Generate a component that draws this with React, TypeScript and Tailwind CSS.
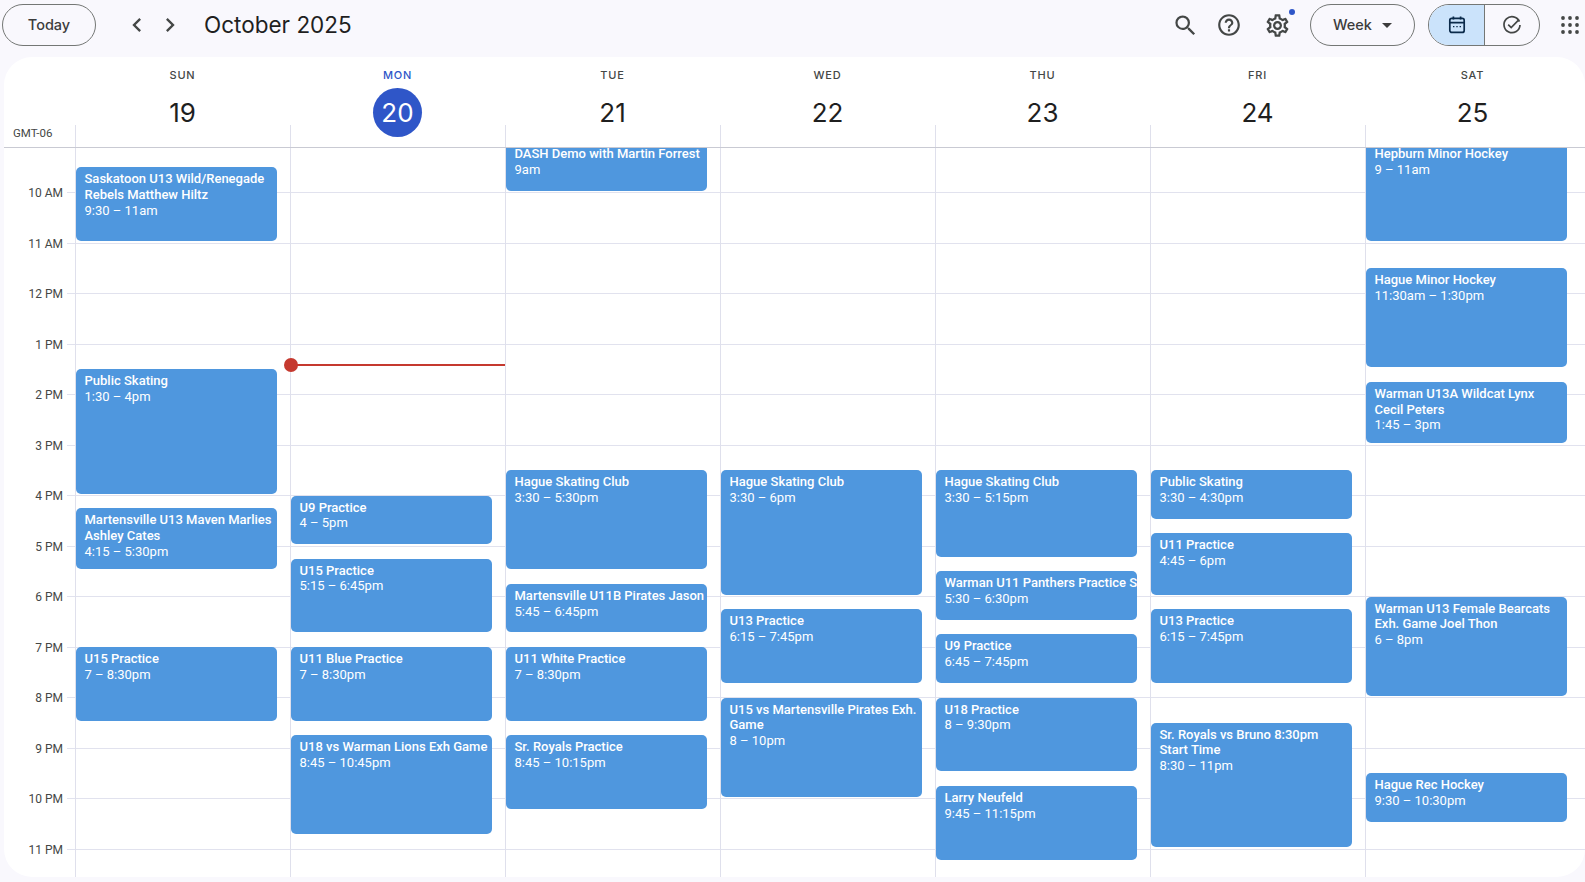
import { MdSearch, MdOutlineHelpOutline, MdOutlineSettings, MdArrowDropDown, MdChevronLeft, MdChevronRight } from "react-icons/md"

type CalEvent = { title: string; time: string; start: number; end: number }

const HOUR = 50.5
const FIRST_HOUR = 9

const days: { name: string; num: number; today?: boolean; events: CalEvent[] }[] = [
  {
    name: "SUN",
    num: 19,
    events: [
      { title: "Saskatoon U13 Wild/Renegade Rebels Matthew Hiltz", time: "9:30 – 11am", start: 9.5, end: 11 },
      { title: "Public Skating", time: "1:30 – 4pm", start: 13.5, end: 16 },
      { title: "Martensville U13 Maven Marlies Ashley Cates", time: "4:15 – 5:30pm", start: 16.25, end: 17.5 },
      { title: "U15 Practice", time: "7 – 8:30pm", start: 19, end: 20.5 },
    ],
  },
  {
    name: "MON",
    num: 20,
    today: true,
    events: [
      { title: "U9 Practice", time: "4 – 5pm", start: 16, end: 17 },
      { title: "U15 Practice", time: "5:15 – 6:45pm", start: 17.25, end: 18.75 },
      { title: "U11 Blue Practice", time: "7 – 8:30pm", start: 19, end: 20.5 },
      { title: "U18 vs Warman Lions Exh Game", time: "8:45 – 10:45pm", start: 20.75, end: 22.75 },
    ],
  },
  {
    name: "TUE",
    num: 21,
    events: [
      { title: "DASH Demo with Martin Forrest", time: "9am", start: 9, end: 10 },
      { title: "Hague Skating Club", time: "3:30 – 5:30pm", start: 15.5, end: 17.5 },
      { title: "Martensville U11B Pirates Jason", time: "5:45 – 6:45pm", start: 17.75, end: 18.75 },
      { title: "U11 White Practice", time: "7 – 8:30pm", start: 19, end: 20.5 },
      { title: "Sr. Royals Practice", time: "8:45 – 10:15pm", start: 20.75, end: 22.25 },
    ],
  },
  {
    name: "WED",
    num: 22,
    events: [
      { title: "Hague Skating Club", time: "3:30 – 6pm", start: 15.5, end: 18 },
      { title: "U13 Practice", time: "6:15 – 7:45pm", start: 18.25, end: 19.75 },
      { title: "U15 vs Martensville Pirates Exh. Game", time: "8 – 10pm", start: 20, end: 22 },
    ],
  },
  {
    name: "THU",
    num: 23,
    events: [
      { title: "Hague Skating Club", time: "3:30 – 5:15pm", start: 15.5, end: 17.25 },
      { title: "Warman U11 Panthers Practice Session", time: "5:30 – 6:30pm", start: 17.5, end: 18.5 },
      { title: "U9 Practice", time: "6:45 – 7:45pm", start: 18.75, end: 19.75 },
      { title: "U18 Practice", time: "8 – 9:30pm", start: 20, end: 21.5 },
      { title: "Larry Neufeld", time: "9:45 – 11:15pm", start: 21.75, end: 23.25 },
    ],
  },
  {
    name: "FRI",
    num: 24,
    events: [
      { title: "Public Skating", time: "3:30 – 4:30pm", start: 15.5, end: 16.5 },
      { title: "U11 Practice", time: "4:45 – 6pm", start: 16.75, end: 18 },
      { title: "U13 Practice", time: "6:15 – 7:45pm", start: 18.25, end: 19.75 },
      { title: "Sr. Royals vs Bruno 8:30pm Start Time", time: "8:30 – 11pm", start: 20.5, end: 23 },
    ],
  },
  {
    name: "SAT",
    num: 25,
    events: [
      { title: "Hepburn Minor Hockey", time: "9 – 11am", start: 9, end: 11 },
      { title: "Hague Minor Hockey", time: "11:30am – 1:30pm", start: 11.5, end: 13.5 },
      { title: "Warman U13A Wildcat Lynx Cecil Peters", time: "1:45 – 3pm", start: 13.75, end: 15 },
      { title: "Warman U13 Female Bearcats Exh. Game Joel Thon", time: "6 – 8pm", start: 18, end: 20 },
      { title: "Hague Rec Hockey", time: "9:30 – 10:30pm", start: 21.5, end: 22.5 },
    ],
  },
]

const hours = ["9 AM", "10 AM", "11 AM", "12 PM", "1 PM", "2 PM", "3 PM", "4 PM", "5 PM", "6 PM", "7 PM", "8 PM", "9 PM", "10 PM", "11 PM"]

function EventCard({ event }: { event: CalEvent }) {
  const nowrap = event.title.startsWith("Warman U11 Panthers")
  return (
    <div
      className="absolute left-0 w-[201px] overflow-hidden rounded-[5px] bg-[#4f97de] pl-[8.5px] pr-[2px] pt-[4px] text-[13px] leading-[15.7px] text-white"
      style={{ top: (event.start - FIRST_HOUR) * HOUR, height: (event.end - event.start) * HOUR - 2 }}
    >
      <div className={nowrap ? "whitespace-nowrap font-medium" : "font-medium"}>{event.title}</div>
      <div>{event.time}</div>
    </div>
  )
}

function CalendarIcon() {
  return (
    <svg width="20" height="20" viewBox="0 0 20 20" fill="none" stroke="#0b2a4a" strokeWidth="1.7">
      <rect x="2.8" y="3.4" width="14.4" height="14" rx="2" />
      <path d="M2.8 7.6h14.4M6.4 1.4v3M13.6 1.4v3" />
      <path d="M6 11.6h1.4M9.3 11.6h1.4M12.6 11.6h1.4" strokeWidth="1.4" />
    </svg>
  )
}

function TaskIcon() {
  return (
    <svg width="20" height="20" viewBox="0 0 20 20" fill="none" stroke="#444746" strokeWidth="1.7">
      <path d="M17.4 6.6A8 8 0 1 0 18 10" />
      <path d="M6.2 9.6l3 3 7.8-8" />
    </svg>
  )
}

function AppsIcon() {
  const spots = [2, 9, 16]
  return (
    <svg width="18" height="18" viewBox="0 0 18 18" fill="#444746">
      {spots.map((y) => spots.map((x) => <circle key={`${x}-${y}`} cx={x} cy={y} r="1.9" />))}
    </svg>
  )
}

export default function App() {
  return (
    <div className="h-screen w-full overflow-hidden bg-[#f9f8fd] font-['Roboto',sans-serif] text-[#1f1f1f]">
      <header className="flex h-[57px] items-center pb-[10px] pt-[3px]">
        <button className="ml-[2px] h-[42px] w-[94px] rounded-full border border-[#747775] font-['Inter',sans-serif] text-[14.5px] font-medium text-[#3c3c3c]">
          Today
        </button>
        <div className="ml-[27px] flex items-center gap-[5px] text-[#444746]">
          <MdChevronLeft size={28} />
          <MdChevronRight size={28} />
        </div>
        <h1 className="ml-[20px] font-['Inter',sans-serif] text-[22.5px] font-normal">October 2025</h1>
        <div className="ml-auto flex items-center text-[#444746]">
          <MdSearch size={27} />
          <MdOutlineHelpOutline size={26} className="ml-[17px]" />
          <div className="relative ml-[22px]">
            <MdOutlineSettings size={27} />
            <span className="absolute right-[-4px] top-[-3px] h-[6px] w-[6px] rounded-full bg-[#2f56c8]" />
          </div>
          <button className="ml-[19px] flex h-[42px] w-[105px] items-center justify-center rounded-full border border-[#747775] pl-[7px] font-['Inter',sans-serif] text-[14.5px] font-medium text-[#3c3c3c]">
            Week
            <MdArrowDropDown size={24} className="ml-[3px]" />
          </button>
          <div className="ml-[13px] flex h-[42px] w-[112px] overflow-hidden rounded-full border border-[#747775]">
            <div className="flex w-[56px] items-center justify-center border-r border-[#747775] bg-[#cbe3fb]">
              <CalendarIcon />
            </div>
            <div className="flex flex-1 items-center justify-center">
              <TaskIcon />
            </div>
          </div>
          <div className="ml-[21px] mr-[6px]">
            <AppsIcon />
          </div>
        </div>
      </header>

      <main className="ml-[4px] h-[820px] overflow-hidden rounded-[28px] bg-white">
        <div className="flex h-[90px]">
          <div className="w-[71px] shrink-0 pl-[9px] pt-[69px] text-[11.5px] leading-[14px] text-[#444746]">GMT-06</div>
          {days.map((day) => (
            <div key={day.name} className="relative w-[215px] shrink-0 text-center">
              <span className="absolute bottom-0 left-0 top-[68px] w-px bg-[#dfe0ec]" />
              <div
                className={`pt-[11px] font-['Inter',sans-serif] text-[11px] font-medium leading-[14px] tracking-[0.8px] ${day.today ? "text-[#2f56c8]" : "text-[#444746]"}`}
              >
                {day.name}
              </div>
              <div
                className={`mx-auto mt-[6px] flex h-[49px] w-[49px] items-center justify-center rounded-full font-['Inter',sans-serif] text-[26px] ${day.today ? "bg-[#2f56c8] text-white" : "text-[#1f1f1f]"}`}
              >
                {day.num}
              </div>
            </div>
          ))}
        </div>

        <div className="relative h-[730px] overflow-hidden border-t border-[#c9cad3]">
          <div className="mt-[-6.5px]">
            {hours.map((label) => (
              <div key={label} className="relative ml-[63px] h-[50.5px] border-t border-[#e1e2ee]">
                <span className="absolute right-full top-[-8px] mr-[4px] whitespace-nowrap text-[12px] leading-[16px] text-[#444746]">
                  {label}
                </span>
              </div>
            ))}
          </div>
          <div className="absolute inset-y-0 left-[71px] flex">
            {days.map((day) => (
              <div key={day.name} className="relative w-[215px] border-l border-[#dfe0ec]">
                <div className="absolute inset-x-0 top-[-6px]">
                  {day.events.map((event) => (
                    <EventCard key={event.title + event.start} event={event} />
                  ))}
                </div>
                {day.today && (
                  <div className="absolute inset-x-0 top-[216px] h-[2px] bg-[#c5392f]">
                    <span className="absolute left-[-7px] top-[-6px] h-[14px] w-[14px] rounded-full bg-[#c5392f]" />
                  </div>
                )}
              </div>
            ))}
          </div>
        </div>
      </main>
    </div>
  )
}
